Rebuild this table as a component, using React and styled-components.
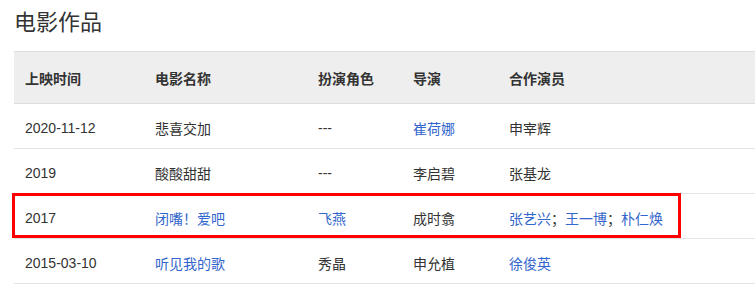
import React from "react";
import styled, { createGlobalStyle } from "styled-components";

const Global = createGlobalStyle`
  html, body { margin: 0; padding: 0; background: #fff; }
  body { font-family: "Liberation Sans", Arial, "Noto Sans CJK SC", sans-serif; color: #333; }
`;

const Page = styled.div`
  padding: 0 0 0 14px;
  width: 755px;
  box-sizing: border-box;
  overflow: hidden;
`;

const Title = styled.h2`
  margin: 0;
  height: 51px;
  line-height: 40px;
  font-size: 22px;
  font-weight: normal;
  color: #333;
  font-family: "Noto Sans CJK SC", sans-serif;
`;

const Frame = styled.div`
  position: relative;
`;

const Table = styled.table`
  width: 741px;
  border-collapse: collapse;
  table-layout: fixed;
  font-size: 14px;
`;

const HeadRow = styled.tr`
  background: #eee;
  border-top: 1px solid #ddd;
  border-bottom: 1px solid #ddd;
`;

const Th = styled.th`
  width: ${(p) => p.$w || "auto"};
  height: 52px;
  box-sizing: border-box;
  padding: 0 0 0 11px;
  text-align: left;
  font-weight: bold;
  color: #333;
  font-family: "Noto Sans CJK SC", sans-serif;
`;

const Row = styled.tr`
  border-bottom: 1px solid #e5e5e5;
`;

const Td = styled.td`
  height: 45px;
  padding: 3px 0 0 11px;
  box-sizing: border-box;
  color: #333;
  white-space: nowrap;
`;

const Link = styled.a`
  color: #3366cc;
  text-decoration: none;
`;

const Sep = styled.span`
  color: #333;
`;

const Highlight = styled.div`
  position: absolute;
  left: -2px;
  top: 142px;
  width: 669px;
  height: 45px;
  border: 3px solid #ff0000;
  box-sizing: border-box;
  pointer-events: none;
`;

const rows = [
  { date: "2020-11-12", film: { t: "悲喜交加" }, role: { t: "---" }, dir: { t: "崔荷娜", l: true }, cast: [{ t: "申宰辉" }] },
  { date: "2019", film: { t: "酸酸甜甜" }, role: { t: "---" }, dir: { t: "李启碧" }, cast: [{ t: "张基龙" }] },
  { date: "2017", film: { t: "闭嘴！爱吧", l: true }, role: { t: "飞燕", l: true }, dir: { t: "成时翕" }, cast: [{ t: "张艺兴", l: true }, { t: "王一博", l: true }, { t: "朴仁焕", l: true }] },
  { date: "2015-03-10", film: { t: "听见我的歌", l: true }, role: { t: "秀晶" }, dir: { t: "申允植" }, cast: [{ t: "徐俊英", l: true }] },
];

const Cell = ({ v }) => (v.l ? <Link href="#">{v.t}</Link> : <>{v.t}</>);

export default function App() {
  return (
    <Page>
      <Global />
      <Title>电影作品</Title>
      <Frame>
        <Table>
          <thead>
            <HeadRow>
              <Th $w="130px">上映时间</Th>
              <Th $w="163px">电影名称</Th>
              <Th $w="95px">扮演角色</Th>
              <Th $w="96px">导演</Th>
              <Th>合作演员</Th>
            </HeadRow>
          </thead>
          <tbody>
            {rows.map((r, i) => (
              <Row key={i}>
                <Td>{r.date}</Td>
                <Td><Cell v={r.film} /></Td>
                <Td><Cell v={r.role} /></Td>
                <Td><Cell v={r.dir} /></Td>
                <Td>
                  {r.cast.map((c, j) => (
                    <React.Fragment key={j}>
                      {j > 0 && <Sep>；</Sep>}
                      <Cell v={c} />
                    </React.Fragment>
                  ))}
                </Td>
              </Row>
            ))}
          </tbody>
        </Table>
        <Highlight />
      </Frame>
    </Page>
  );
}
